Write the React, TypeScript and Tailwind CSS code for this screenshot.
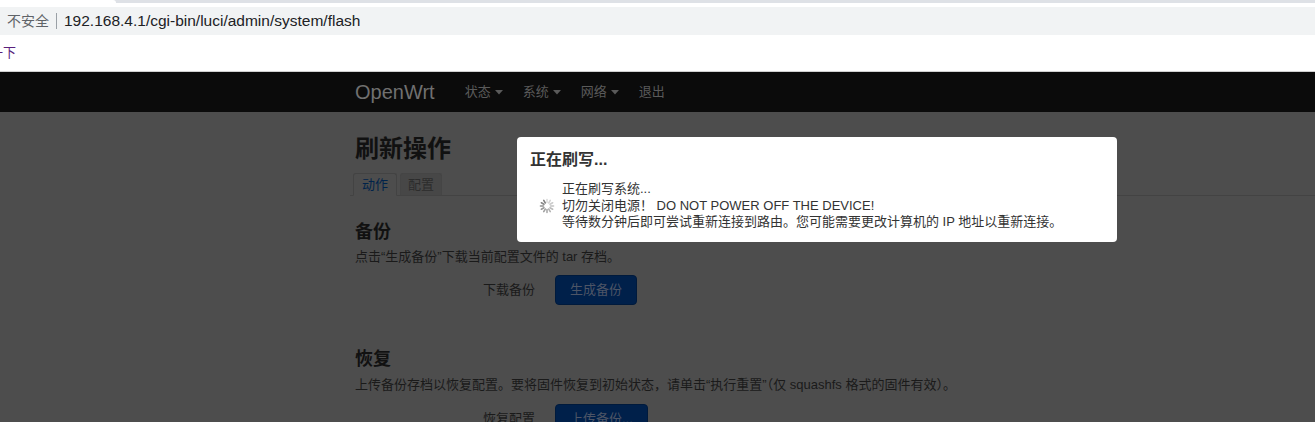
import React from "react";

const font = { fontFamily: '"Liberation Sans", "Noto Sans CJK SC", sans-serif' };

const Caret = () => (
  <svg width="8" height="5" viewBox="0 0 8 5" className="ml-1 inline-block">
    <path d="M0 0 L8 0 L4 4.5 Z" fill="#5a5a5a" />
  </svg>
);

const Spinner = () => {
  const spokes = Array.from({ length: 12 }, (_, i) => i);
  return (
    <svg width="16" height="16" viewBox="0 0 16 16">
      {spokes.map((i) => (
        <line
          key={i}
          x1="8"
          y1="1.5"
          x2="8"
          y2="4.5"
          stroke="#777"
          strokeWidth="1.6"
          strokeLinecap="round"
          opacity={0.25 + (i / 12) * 0.75}
          transform={`rotate(${i * 30} 8 8)`}
        />
      ))}
    </svg>
  );
};

export default function App() {
  return (
    <div className="relative w-[1315px] h-[422px] overflow-hidden bg-[#4d4d4d]" style={font}>
      {/* browser chrome */}
      <div className="bg-white">
        <div className="flex h-[3px] bg-[#dee1e6]">
          <div className="w-[116px] bg-white rounded-tr-md" />
        </div>
        <div className="h-[4px] bg-white" />
        <div className="flex items-center h-[28px] bg-[#f1f3f4]">
          <span className="pl-[7px] text-[#5f6368] text-[14px]">不安全</span>
          <span className="mx-[7px] h-[16px] w-px bg-[#9aa0a6]" />
          <span className="text-[#202124] text-[15.5px]">192.168.4.1/cgi-bin/luci/admin/system/flash</span>
        </div>
        <div className="h-[36px] flex items-center">
          <span className="ml-[-10px] text-[13px] text-[#5a1f7c]">一下</span>
        </div>
        <div className="h-px bg-[#d0d0d0]" />
      </div>

      {/* nav bar */}
      <div className="flex items-center h-[40px] bg-[#0b0b0b] pl-[355px]">
        <span className="text-[20px] text-[#707070] mr-[30px]">OpenWrt</span>
        <span className="text-[13px] text-[#5a5a5a] mr-[20px] flex items-center">
          状态<Caret />
        </span>
        <span className="text-[13px] text-[#5a5a5a] mr-[20px] flex items-center">
          系统<Caret />
        </span>
        <span className="text-[13px] text-[#5a5a5a] mr-[20px] flex items-center">
          网络<Caret />
        </span>
        <span className="text-[13px] text-[#5a5a5a]">退出</span>
      </div>

      {/* page content (dimmed) */}
      <div className="pl-[355px] pt-[22px]">
        <h2 className="text-[24px] font-bold text-[#111] leading-[30px]">刷新操作</h2>
        <div className="flex items-end mt-[5px] -ml-[5px] border-b border-[#434343] h-[27px]">
          <div className="ml-[3px] px-[8px] h-[23px] flex items-center text-[13px] text-[#00234a] border border-[#434343] border-b-[#4d4d4d] rounded-t-[3px] -mb-px bg-[#4d4d4d]">
            动作
          </div>
          <div className="ml-[3px] px-[7px] h-[22px] flex items-center text-[13px] text-[#2c2c2c] border border-[#454545] border-b-0 rounded-t-[3px] bg-[#474747]">
            配置
          </div>
        </div>

        <h3 className="mt-[25px] text-[18px] font-bold text-[#111] leading-[22px]">备份</h3>
        <p className="mt-[5px] text-[13px] text-[#1a1a1a] leading-[18px]">
          点击“生成备份”下载当前配置文件的 tar 存档。
        </p>
        <div className="flex items-center mt-[9px]">
          <span className="w-[200px] pr-[20px] text-right text-[13px] text-[#1a1a1a]">下载备份</span>
          <div className="h-[30px] px-[14px] flex items-center rounded-[4px] bg-[#00204a] border border-[#001a3c] text-[13px] text-[#4d5566]">
            生成备份
          </div>
        </div>

        <h3 className="mt-[43px] text-[18px] font-bold text-[#111] leading-[22px]">恢复</h3>
        <p className="mt-[6px] text-[13px] text-[#1a1a1a] leading-[18px]">
          上传备份存档以恢复配置。要将固件恢复到初始状态，请单击“执行重置”（仅 squashfs 格式的固件有效）。
        </p>
        <div className="flex items-center mt-[10px]">
          <span className="w-[200px] pr-[20px] text-right text-[13px] text-[#1a1a1a]">恢复配置</span>
          <div className="h-[30px] px-[14px] flex items-center rounded-[4px] bg-[#00204a] border border-[#001a3c] text-[13px] text-[#4d5566]">
            上传备份...
          </div>
        </div>
      </div>

      {/* modal */}
      <div className="absolute left-[517px] top-[137px] w-[600px] h-[105px] bg-white rounded-[4px] px-[13px] pt-[12px]">
        <div className="text-[16px] font-bold text-[#333] leading-[22px]">正在刷写...</div>
        <div className="flex items-center mt-[10px]">
          <div className="w-[32px] flex justify-center pl-[2px]">
            <Spinner />
          </div>
          <div className="text-[13px] text-[#333] leading-[16.5px]">
            <div>正在刷写系统...</div>
            <div>切勿关闭电源！ DO NOT POWER OFF THE DEVICE!</div>
            <div>等待数分钟后即可尝试重新连接到路由。您可能需要更改计算机的 IP 地址以重新连接。</div>
          </div>
        </div>
      </div>
    </div>
  );
}
